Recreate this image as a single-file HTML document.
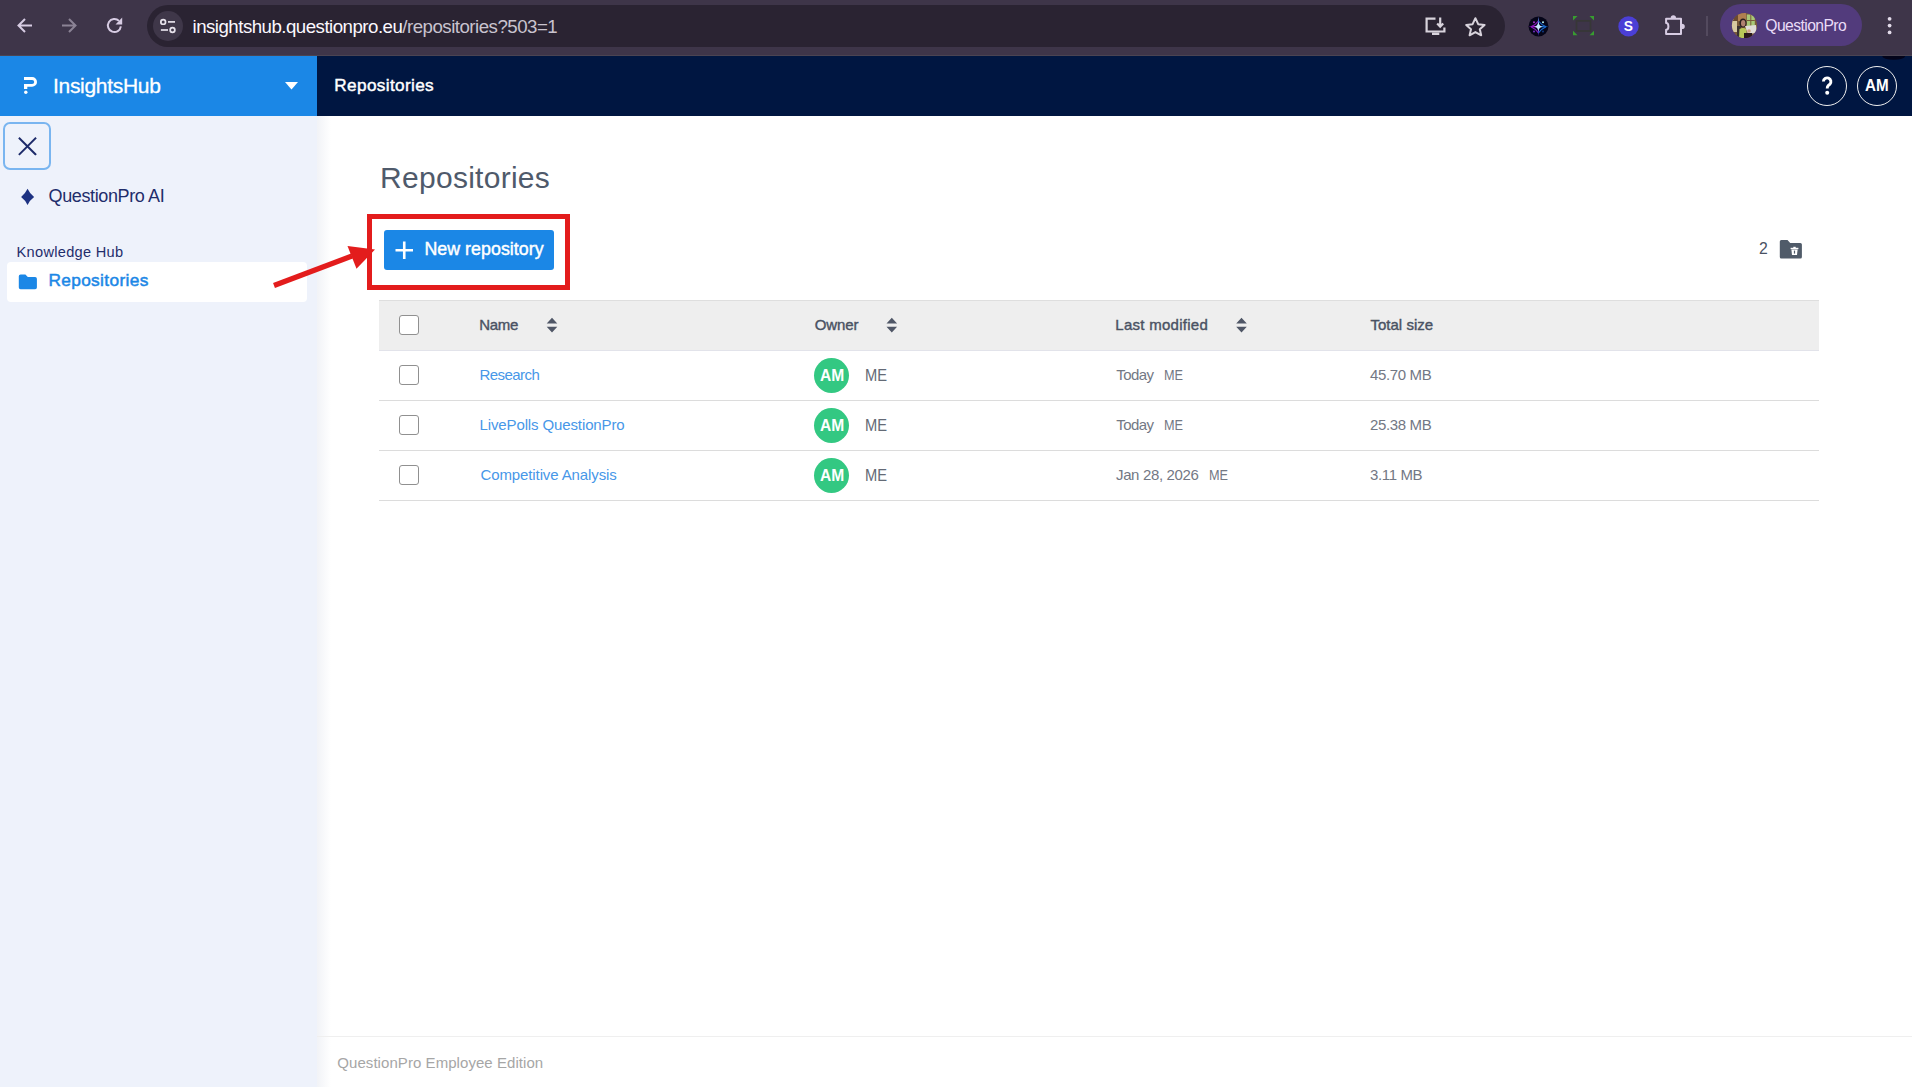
<!DOCTYPE html>
<html><head><meta charset="utf-8">
<style>
*{box-sizing:border-box;margin:0;padding:0}
html,body{width:1912px;height:1087px;overflow:hidden;background:#fff;font-family:"Liberation Sans",sans-serif}
.abs{position:absolute}
svg{position:absolute;overflow:visible}
#chrome{position:absolute;left:0;top:0;width:1912px;height:56px;background:#3e3549}
#omni{position:absolute;left:147px;top:5px;width:1358px;height:42px;border-radius:21px;background:#2a2332}
#siteinfo{position:absolute;left:153px;top:11px;width:30px;height:30px;border-radius:15px;background:#3f3749}
#url{position:absolute;left:192.5px;top:18.4px;font-size:18.7px;letter-spacing:-0.52px;color:#fbf8ff;white-space:nowrap;line-height:1}
#url span{color:#c9c3cf}
#pill{position:absolute;left:1720px;top:4px;width:142px;height:42px;border-radius:21px;background:#523b7c}
#sidehead{position:absolute;left:0;top:56px;width:317px;height:60px;background:#1b87e6}
#nav{position:absolute;left:317px;top:56px;width:1595px;height:60px;background:#001641}
#side{position:absolute;left:0;top:116px;width:317px;height:971px;background:#eef2fb}
#shadow{position:absolute;left:317px;top:116px;width:14px;height:971px;background:linear-gradient(to right,rgba(230,233,240,.55),rgba(255,255,255,0))}
.t{position:absolute;white-space:nowrap;line-height:1}
.cb{position:absolute;left:399px;width:20px;height:20px;border:1.4px solid #909090;border-radius:3px;background:#fff}
.link{position:absolute;left:480px;font-size:15px;color:#4797e8;white-space:nowrap;line-height:1}
.av{position:absolute;left:814px;width:35px;height:35px;border-radius:50%;background:#33c882}
.avt{position:absolute;left:819.9px;transform:scaleX(0.916);transform-origin:0 0;font-size:17px;font-weight:bold;color:#fff;line-height:1;white-space:nowrap}
.me{position:absolute;left:865.1px;transform:scaleX(0.864);transform-origin:0 0;font-size:17px;color:#646a76;line-height:1;white-space:nowrap}
.mod{position:absolute;left:1116px;font-size:15px;color:#737884;line-height:1;white-space:nowrap}
.me2{transform:scaleX(0.847);transform-origin:0 0}
.sz{position:absolute;left:1370px;font-size:15px;color:#737884;line-height:1;white-space:nowrap}
.th{position:absolute;top:317.4px;font-size:15px;-webkit-text-stroke:0.4px #4a5263;color:#4a5263;line-height:1;white-space:nowrap}
.row{position:absolute;left:379px;width:1440px;height:1px;background:#dcdcdc}
</style></head><body>
<!-- Chrome toolbar -->
<div id="chrome"></div>
<svg style="left:0;top:0" width="140" height="56">
  <g fill="none" stroke="#d7cce3" stroke-width="2" stroke-linecap="butt">
    <path d="M32,25.5 H18.5 M25,19 L18.5,25.5 L25,32"/>
  </g>
  <g fill="none" stroke="#8b8395" stroke-width="2">
    <path d="M62,25.5 H75.5 M69,19 L75.5,25.5 L69,32"/>
  </g>
  <path d="M120.85,26.3 A6.5,6.5 0 1 1 119,20.9" fill="none" stroke="#d7cce3" stroke-width="2"/>
  <path d="M122.2,17.6 V24.4 H115.5 Z" fill="#d7cce3"/>
</svg>
<div class="abs" style="left:0;top:55px;width:1912px;height:1px;background:#4b4452"></div>
<div id="omni"></div>
<div id="siteinfo"></div>
<svg style="left:0;top:0" width="200" height="56">
  <g fill="none" stroke="#e6e1ea" stroke-width="1.7">
    <circle cx="163.2" cy="21.9" r="2.35"/>
    <path d="M168,21.9 H175"/>
    <circle cx="172.5" cy="30" r="2.35"/>
    <path d="M160.9,30 H168"/>
  </g>
</svg>
<div id="url">insightshub.questionpro.eu<span>/repositories?503=1</span></div>
<svg style="left:0;top:0" width="1912" height="56">
  <g fill="none" stroke="#d8d3dc" stroke-width="2.2">
    <path d="M1435.5,18.6 H1426.6 V31.5 H1444.4 V27.6"/>
    <path d="M1440.2,17.5 V27 M1437.2,23.5 L1440.2,26.7 L1443.2,23.5"/>
  </g>
  <rect x="1432" y="32.5" width="7.3" height="2.5" fill="#d8d3dc"/>
  <path d="M1475.4,18.2 L1478.2,24.2 L1484.6,24.9 L1479.8,29.2 L1481.2,35.3 L1475.4,32.1 L1469.6,35.3 L1471,29.2 L1466.2,24.9 L1472.6,24.2 Z" fill="none" stroke="#d8d3dc" stroke-width="2" stroke-linejoin="round"/>
  <!-- ext1 -->
  <defs>
    <linearGradient id="sp" x1="0" y1="0" x2="1" y2="0">
      <stop offset="0" stop-color="#c23be0"/><stop offset="0.5" stop-color="#b8e8ff"/><stop offset="1" stop-color="#2f7df0"/>
    </linearGradient>
  </defs>
  <circle cx="1538.5" cy="26.4" r="10" fill="#050518"/>
  <path d="M1538.4,16.4 Q1539,26.1 1548.4,26.7 Q1539,27.3 1538.4,36 Q1537.8,27.3 1528.6,26.7 Q1537.8,26.1 1538.4,16.4 Z" fill="none"/>
  <path d="M1538.4,16.4 Q1539.6,25.5 1538.4,26.7 Q1537.2,25.5 1538.4,16.4 Z" fill="#6a8cf0"/>
  <path d="M1548.4,26.7 Q1539.6,28 1538.4,26.7 Q1539.6,25.4 1548.4,26.7 Z" fill="#1a7ee8"/>
  <path d="M1528.6,26.7 Q1537.2,28 1538.4,26.7 Q1537.2,25.4 1528.6,26.7 Z" fill="#b01ad8"/>
  <path d="M1538.4,36 Q1537.2,27.9 1538.4,26.7 Q1539.6,27.9 1538.4,36 Z" fill="#6a30d8"/>
  <path d="M1538.4,22 Q1539,26.1 1542.6,26.7 Q1539,27.3 1538.4,31 Q1537.8,27.3 1534.2,26.7 Q1537.8,26.1 1538.4,22 Z" fill="#c8e8ff"/>
  <path d="M1531,26.7 Q1536,24.5 1538.4,21 M1531,26.7 Q1536,29 1538.4,33" stroke="#8a1ac0" stroke-width="1.1" fill="none"/>
  <path d="M1546,26.7 Q1541,24.5 1538.4,21 M1546,26.7 Q1541,29 1538.4,33" stroke="#1a6ad0" stroke-width="1.1" fill="none"/>
  <circle cx="1534" cy="22.3" r="1" fill="#a030c8"/><circle cx="1543" cy="22.3" r="1" fill="#b0f0f0"/>
  <circle cx="1534" cy="31.6" r="1" fill="#7030c0"/><circle cx="1543" cy="31.6" r="1" fill="#103a80"/>
  <!-- ext2 -->
  <rect x="1576.5" y="20.8" width="14" height="10.2" fill="none" stroke="#373737" stroke-width="1.7"/>
  <g fill="#389d30">
    <path d="M1573,16 H1577.5 L1573,20.5 Z"/><path d="M1594,16 H1589.5 L1594,20.5 Z"/>
    <path d="M1573,35.3 H1577.5 L1573,30.8 Z"/><path d="M1594,35.3 H1589.5 L1594,30.8 Z"/>
  </g>
  <!-- ext3 -->
  <circle cx="1628.5" cy="26.4" r="10.2" fill="#4b3fd6"/>
  <text x="1628.4" y="31.3" text-anchor="middle" font-family="Liberation Sans" font-weight="bold" font-size="13.8" fill="#fff">S</text>
  <!-- puzzle -->
  <path d="M1666.1,18.8 H1681 V34 H1666.1 V29.8 A2.3,3.4 0 0 0 1666.1,23 Z" fill="none" stroke="#d7cce3" stroke-width="2" stroke-linejoin="round"/>
  <path d="M1670.7,18 A2.65,2.65 0 0 1 1676,18 Z M1681.8,23.8 A3,2.65 0 0 1 1681.8,29.1 Z" fill="#d7cce3"/>
  <rect x="1706.3" y="16" width="1.4" height="20" fill="#5d5468"/>
  <!-- kebab -->
  <g fill="#e3dcea"><circle cx="1889.6" cy="18.8" r="1.9"/><circle cx="1889.6" cy="25.6" r="1.9"/><circle cx="1889.6" cy="32.4" r="1.9"/></g>
</svg>
<div id="pill"></div>
<svg style="left:0;top:0" width="1912" height="56">
  <defs><clipPath id="avc"><circle cx="1744.5" cy="25.5" r="12.6"/></clipPath></defs>
  <g clip-path="url(#avc)">
    <rect x="1731" y="12" width="27" height="27" fill="#7a5a3a"/>
    <rect x="1737" y="12" width="9" height="9" fill="#b08050"/>
    <rect x="1731" y="19" width="6" height="13" fill="#d8c8a0"/>
    <rect x="1746.8" y="14.5" width="8" height="11.5" fill="#a8c878"/>
    <rect x="1750.3" y="14.5" width="1" height="11.5" fill="#7a5a3a"/>
    <rect x="1746.8" y="20" width="8" height="1" fill="#7a5a3a"/>
    <rect x="1733" y="15" width="5" height="6" fill="#6a4a30"/>
    <ellipse cx="1743" cy="23" rx="3.6" ry="4.6" fill="#2a2020"/>
    <ellipse cx="1743.2" cy="23.3" rx="2.2" ry="3.2" fill="#b08070"/>
    <rect x="1737" y="26" width="4" height="12" fill="#3a3030"/>
    <path d="M1739,38 L1739.5,29 Q1743,27 1746.5,29 L1746.5,38 Z" fill="#b8c858"/>
    <path d="M1745,26 L1756,25 L1757,33 L1748,34 Z" fill="#e0dcd8"/>
    <rect x="1744" y="33" width="8" height="6" fill="#2a1a1a"/>
    <circle cx="1749" cy="31" r="1.8" fill="#d0a080"/>
  </g>
</svg>
<div class="t" style="left:1765.3px;top:18.4px;font-size:15.7px;letter-spacing:-0.58px;color:#eadcf7">QuestionPro</div>

<!-- App -->
<div id="sidehead"></div>
<div id="nav"></div>
<div id="side"></div>
<div id="shadow"></div>

<svg style="left:23.8px;top:77px" width="14" height="18">
  <path d="M0,0 H8.1 A4.9,4.9 0 0 1 8.1,9.8 H3.3 V12 H0 V7.1 H8.1 A2.1,2.1 0 0 0 8.1,2.9 H0 Z" fill="#fff"/>
  <circle cx="1.8" cy="15.3" r="1.7" fill="#fff"/>
</svg>
<div class="t" style="left:53px;top:75.1px;font-size:21px;letter-spacing:-0.3px;color:#fff;-webkit-text-stroke:0.3px #fff">InsightsHub</div>
<svg style="left:0;top:56px" width="317" height="60"><path d="M285,26 H298 L291.5,33.5 Z" fill="#fff"/></svg>
<div class="t" style="left:334.3px;top:76.7px;font-size:17.2px;letter-spacing:0.35px;color:#fff;-webkit-text-stroke:0.45px #fff">Repositories</div>

<svg style="left:1870px;top:56px;overflow:hidden" width="42" height="8"><ellipse cx="23.7" cy="0" rx="11.5" ry="3.8" fill="#03041a"/></svg>
<div class="abs" style="left:1807px;top:66px;width:40px;height:40px;border:1.6px solid #f0f0f0;border-radius:50%"></div>
<svg style="left:0;top:0" width="1912" height="120"><path d="M1823.4,81.6 A3.75,3.75 0 1 1 1829.9,84.2 L1828.2,85.6 Q1827.2,86.5 1827.2,88.4" fill="none" stroke="#fff" stroke-width="2.9" stroke-linecap="butt"/><circle cx="1827.2" cy="92.7" r="2" fill="#fff"/></svg>
<div class="abs" style="left:1857px;top:66px;width:40px;height:40px;border:1.6px solid #f0f0f0;border-radius:50%"></div>
<div class="t" style="left:1864.9px;top:77.2px;font-size:17px;color:#fff;font-weight:bold;transform:scaleX(0.894);transform-origin:0 0">AM</div>

<!-- Sidebar -->
<div class="abs" style="left:3.3px;top:122px;width:47.7px;height:48px;border:2px solid #79b5f0;border-radius:7px"></div>
<svg style="left:0;top:0" width="60" height="220">
  <path d="M19.6,138.4 L35.4,154.2 M35.4,138.4 L19.6,154.2" stroke="#1d2b6a" stroke-width="2" stroke-linecap="square"/>
  <path d="M27.55,188.7 Q29.8,193.6 34.1,196.9 Q29.8,200.1 27.55,204.9 Q25.3,200.1 21.1,196.9 Q25.3,193.6 27.55,188.7 Z" fill="#1d3282"/>
</svg>
<div class="t" style="left:48.5px;top:187px;font-size:18px;letter-spacing:-0.37px;color:#1f2d6b">QuestionPro AI</div>
<div class="t" style="left:16.6px;top:245.4px;font-size:14.6px;letter-spacing:0.29px;color:#1f2d6b">Knowledge Hub</div>
<div class="abs" style="left:7px;top:262px;width:300px;height:40px;background:#fff;border-radius:4px"></div>
<svg style="left:0;top:0" width="60" height="300">
  <path d="M18.8,276.3 A1.8,1.8 0 0 1 20.6,274.5 H25.4 L27.8,277 H35.1 A1.8,1.8 0 0 1 36.9,278.8 V287.4 A1.8,1.8 0 0 1 35.1,289.2 H20.6 A1.8,1.8 0 0 1 18.8,287.4 Z" fill="#1b87e6"/>
</svg>
<div class="t" style="left:48.4px;top:272.1px;font-size:17.3px;letter-spacing:0.35px;color:#1b87e6;-webkit-text-stroke:0.5px #1b87e6">Repositories</div>

<!-- Main -->
<div class="t" style="left:380.1px;top:163px;font-size:30px;letter-spacing:0.27px;color:#4f5a6b">Repositories</div>

<div class="abs" style="left:367px;top:214px;width:203px;height:76px;border:5px solid #e31c1c"></div>
<div class="abs" style="left:384px;top:230px;width:170px;height:40px;background:#1b87e6;border-radius:3px"></div>
<svg style="left:0;top:0" width="600" height="300">
  <path d="M395.5,250.3 H413 M404.25,241.5 V259" stroke="#fff" stroke-width="2.6"/>
  <path d="M274,285.5 L352,256" stroke="#e31c1c" stroke-width="5.3"/>
  <path d="M375,249.5 L347.5,246 L356.5,268.8 Z" fill="#e31c1c"/>
</svg>
<div class="t" style="left:424.4px;top:241.2px;font-size:17.8px;letter-spacing:0.05px;color:#fff;-webkit-text-stroke:0.45px #fff">New repository</div>

<div class="t" style="left:1758.6px;top:240.2px;font-size:17px;color:#4a5263;transform:scaleX(0.93);transform-origin:0 0">2</div>
<svg style="left:0;top:0" width="1912" height="300">
  <path d="M1779.8,241.6 A1.5,1.5 0 0 1 1781.3,240.1 H1787.5 L1790.2,243.1 H1800.4 A1.5,1.5 0 0 1 1801.9,244.6 V257 A1.5,1.5 0 0 1 1800.4,258.5 H1781.3 A1.5,1.5 0 0 1 1779.8,257 Z" fill="#505b69"/>
  <g fill="#fff">
    <rect x="1790.6" y="247.8" width="7.8" height="1.4"/>
    <rect x="1793.3" y="246.8" width="2.4" height="1.4"/>
    <path d="M1791.4,249.6 H1797.6 L1797,255 H1792 Z"/>
  </g>
  <rect x="1793.9" y="250.6" width="1.2" height="3" fill="#505b69"/>
</svg>

<!-- Table -->
<div class="abs" style="left:379px;top:300px;width:1440px;height:51px;background:#eeeeee;border-top:1px solid #dedede;border-bottom:1px solid #e2e3ea"></div>
<div class="cb" style="top:315px"></div>
<div class="th" style="left:479.2px;letter-spacing:-0.3px">Name</div>
<div class="th" style="left:814.8px;letter-spacing:-0.15px">Owner</div>
<div class="th" style="left:1115.3px;letter-spacing:0.27px">Last modified</div>
<div class="th" style="left:1370.4px;letter-spacing:0.03px">Total size</div>
<svg style="left:0;top:0" width="1912" height="400">
  <g fill="#4f5666">
    <path d="M546.7,323.4 L552,317.7 L557.3,323.4 Z M546.7,326.7 L552,332.4 L557.3,326.7 Z"/>
    <path d="M886.5,323.4 L891.8,317.7 L897.1,323.4 Z M886.5,326.7 L891.8,332.4 L897.1,326.7 Z"/>
    <path d="M1236.2,323.4 L1241.5,317.7 L1246.8,323.4 Z M1236.2,326.7 L1241.5,332.4 L1246.8,326.7 Z"/>
  </g>
</svg>

<div class="cb" style="top:365px"></div>
<div class="link" style="left:479.5px;top:367.2px;letter-spacing:-0.55px">Research</div>
<div class="av" style="top:358px"></div>
<div class="avt" style="top:367.3px">AM</div>
<div class="me" style="top:367.3px">ME</div>
<div class="mod" style="left:1116.3px;top:367.2px;letter-spacing:-0.61px">Today</div>
<div class="mod me2" style="left:1164px;top:367.2px">ME</div>
<div class="sz" style="top:367.2px;letter-spacing:-0.36px">45.70 MB</div>
<div class="row" style="top:400px"></div>

<div class="cb" style="top:415px"></div>
<div class="link" style="left:479.5px;top:417.2px;letter-spacing:-0.12px">LivePolls QuestionPro</div>
<div class="av" style="top:408px"></div>
<div class="avt" style="top:417.3px">AM</div>
<div class="me" style="top:417.3px">ME</div>
<div class="mod" style="left:1116.3px;top:417.2px;letter-spacing:-0.61px">Today</div>
<div class="mod me2" style="left:1164px;top:417.2px">ME</div>
<div class="sz" style="top:417.2px;letter-spacing:-0.36px">25.38 MB</div>
<div class="row" style="top:450px"></div>

<div class="cb" style="top:465px"></div>
<div class="link" style="left:480.5px;top:467.2px;letter-spacing:-0.11px">Competitive Analysis</div>
<div class="av" style="top:458px"></div>
<div class="avt" style="top:467.3px">AM</div>
<div class="me" style="top:467.3px">ME</div>
<div class="mod" style="left:1116px;top:467.2px;letter-spacing:-0.36px">Jan 28, 2026</div>
<div class="mod me2" style="left:1208.9px;top:467.2px">ME</div>
<div class="sz" style="top:467.2px;letter-spacing:-0.36px">3.11 MB</div>
<div class="row" style="top:500px"></div>

<!-- Footer -->
<div class="abs" style="left:317px;top:1036px;width:1595px;height:1px;background:#efefef"></div>
<div class="t" style="left:337.3px;top:1055.2px;font-size:15px;letter-spacing:0.06px;color:#a6a6a6">QuestionPro Employee Edition</div>
</body></html>
